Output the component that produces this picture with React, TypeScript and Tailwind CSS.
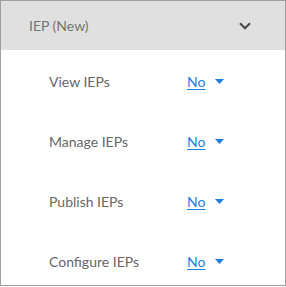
import React from 'react';

const rows = ['View IEPs', 'Manage IEPs', 'Publish IEPs', 'Configure IEPs'];

function Caret() {
  return (
    <svg width="9" height="5" viewBox="0 0 9 5" className="ml-[10px]">
      <path d="M0 0 L9 0 L4.5 5 Z" fill="#1e7fe0" />
    </svg>
  );
}

export default function App() {
  return (
    <div className="w-[286px] h-[286px] border border-[#9e9e9e] bg-white font-['Lato',sans-serif] flex flex-col overflow-hidden">
      {/* Header */}
      <div className="h-[49px] shrink-0 bg-[#e0e0e0] flex items-center justify-between pl-[28px] pr-[34px]">
        <span className="text-[14px] text-[#737373]">IEP (New)</span>
        <svg width="12" height="8" viewBox="0 0 12 8">
          <path d="M1 1.2 L6 6.2 L11 1.2" fill="none" stroke="#4a4a4a" strokeWidth="2.2" />
        </svg>
      </div>

      {/* Permissions */}
      <div className="flex flex-col shrink-0 pt-[1px]">
        {rows.map(r => (
          <div key={r} className="h-[60px] shrink-0 flex items-center pl-[48px]">
            <span className="w-[138px] text-[14px] text-[#666666]">{r}</span>
            <a className="text-[14px] text-[#1e7fe0] underline underline-offset-2">No</a>
            <Caret />
          </div>
        ))}
      </div>
    </div>
  );
}
